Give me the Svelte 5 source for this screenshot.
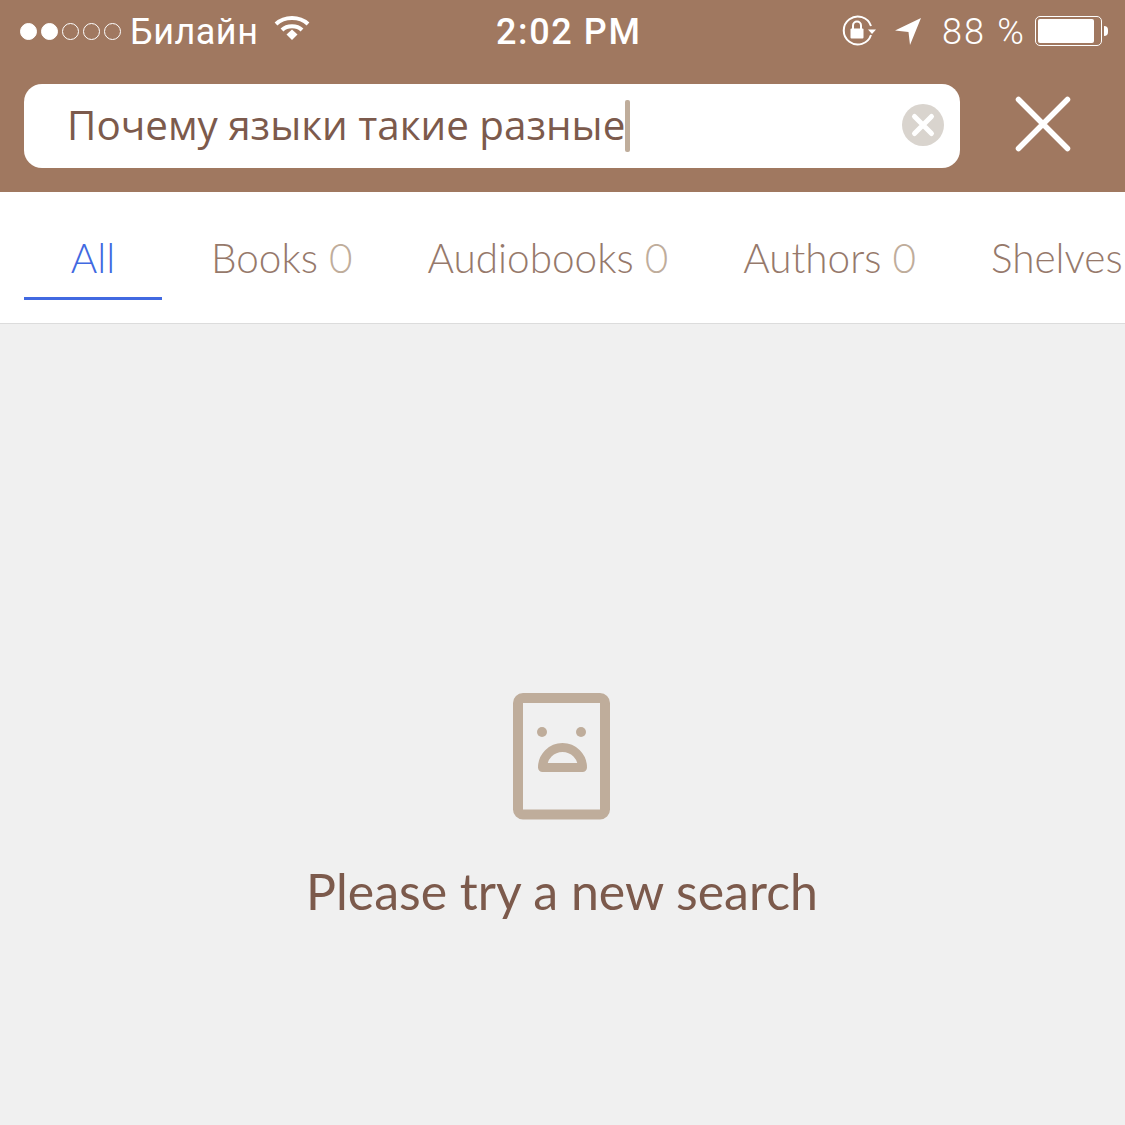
<script lang="ts">
  const tabs = [
    {label: 'All', count: null, active: true},
    {label: 'Books', count: 0},
    {label: 'Audiobooks', count: 0},
    {label: 'Authors', count: 0},
    {label: 'Shelves', count: null},
  ]
</script>

<div class="screen">
  <header class="top">
    <div class="status">
      <div class="status__left">
        <div class="signal">
          <i class="on"></i><i class="on"></i><i></i><i></i><i></i>
        </div>
        <span class="carrier">Билайн</span>
        <svg class="wifi" width="36" height="28" viewBox="0 0 36 28" fill="none" stroke="#fff" stroke-width="4">
          <path d="M2 10C10.500 2 25.500 2 34 10" />
          <path d="M8 16C13 11 23 11 28 16" />
          <path d="M12.500 20.600L18 15.500L23.500 20.600L18 26Z" fill="#fff" stroke="none" />
        </svg>
      </div>
      <span class="clock">2:02 PM</span>
      <div class="status__right">
        <svg class="lock" width="36" height="32" viewBox="0 0 36 32" fill="none">
          <path d="M30 20A14 14 0 1 1 30 11" stroke="#fff" stroke-width="2" />
          <path d="M27 14.500h8l-4 4.500z" fill="#fff" />
          <rect x="9.500" y="13.500" width="13" height="10" rx="1" fill="#fff" />
          <path d="M12 14V10.500a4 4 0 0 1 8 0V14" stroke="#fff" stroke-width="2" />
        </svg>
        <svg class="arrow" width="28" height="30" viewBox="0 0 28 30">
          <path d="M1 14.500L27 2L16 29L14.500 16Z" fill="#fff" />
        </svg>
        <span class="percent">88 %</span>
        <div class="battery"><span class="battery__level"></span></div>
        <span class="battery__tip"></span>
      </div>
    </div>
    <div class="search">
      <div class="search__box">
        <span class="search__text">Почему языки такие разные</span>
        <span class="caret"></span>
        <svg class="search__clear" width="44" height="44" viewBox="0 0 44 44">
          <circle cx="22" cy="22" r="21" fill="#d9d4ce" />
          <path d="M13.500 13.500L30.500 30.500M30.500 13.500L13.500 30.500" stroke="#fff" stroke-width="5" stroke-linecap="round" />
        </svg>
      </div>
      <svg class="search__close" width="56" height="56" viewBox="0 0 56 56">
        <path d="M3.500 3.500L52.500 52.500M52.500 3.500L3.500 52.500" stroke="#fff" stroke-width="5.500" stroke-linecap="round" />
      </svg>
    </div>
  </header>

  <nav class="tabs">
    {#each tabs as tab}
      <div class="tab" class:tab--active={tab.active}>
        {tab.label}{#if tab.count !== null && tab.count !== undefined}&nbsp;<span class="tab__count">{tab.count}</span>{/if}
      </div>
    {/each}
  </nav>

  <main class="empty">
    <svg class="empty__icon" width="98" height="127" viewBox="0 0 98 127" fill="none">
      <rect x="5" y="5" width="87" height="116.500" rx="5" stroke="#bfad9b" stroke-width="10" />
      <circle cx="29" cy="39" r="5" fill="#bfad9b" />
      <circle cx="68" cy="39" r="5" fill="#bfad9b" />
      <path d="M29.500 74.500a20 20 0 0 1 40 0Z" stroke="#bfad9b" stroke-width="9" stroke-linejoin="round" />
    </svg>
    <p class="empty__text">Please try a new search</p>
  </main>
</div>

<style>
  :global(body) {
    margin: 0;
  }

  .screen {
    display: flex;
    flex-direction: column;
    width: 1125px;
    height: 1125px;
    overflow: hidden;
    background: #f0f0f0;
    font-family: Lato, 'Noto Sans', sans-serif;
  }

  .top {
    height: 192px;
    background: #a07860;
  }

  .status {
    display: flex;
    justify-content: space-between;
    align-items: center;
    height: 62px;
    padding: 0 17px 0 20px;
    color: #fff;
    font-family: Roboto, sans-serif;
    font-size: 36px;
    position: relative;
  }

  .status__left,
  .status__right {
    display: flex;
    align-items: center;
  }

  .signal {
    display: flex;
    gap: 4px;
    margin-right: 9px;
  }

  .signal i {
    width: 15px;
    height: 15px;
    border: 1px solid #fff;
    border-radius: 50%;
  }

  .signal i.on {
    background: #fff;
  }

  .carrier {
    margin-top: 2px;
    letter-spacing: 0.5px;
  }

  .wifi {
    margin: -6px 0 0 16px;
  }

  .clock {
    position: absolute;
    left: 496px;
    top: 11px;
    font-weight: 500;
    letter-spacing: 1.6px;
  }

  .lock {
    margin-right: 17px;
  }

  .arrow {
    margin-right: 20px;
  }

  .percent {
    margin: 2px 9px 0 0;
    letter-spacing: 2.200px;
    font-weight: 300;
  }

  .battery {
    box-sizing: border-box;
    width: 67px;
    height: 30px;
    padding: 2px;
    border: 1px solid #fff;
    border-radius: 5px;
  }

  .battery__level {
    display: block;
    width: 56px;
    height: 24px;
    background: #fff;
    border-radius: 2px;
  }

  .battery__tip {
    width: 4px;
    height: 10px;
    margin-left: 2px;
    background: #fff;
    border-radius: 0 4px 4px 0;
  }

  .search {
    display: flex;
    align-items: center;
    padding: 22px 0 0 24px;
  }

  .search__box {
    display: flex;
    align-items: center;
    width: 936px;
    height: 84px;
    padding: 0 15px 0 43px;
    box-sizing: border-box;
    background: #fff;
    border-radius: 18px;
  }

  .search__text {
    margin-top: -4px;
    color: #7c5a4c;
    font-family: 'Open Sans', sans-serif;
    font-size: 40.400px;
  }

  .caret {
    width: 5px;
    height: 52px;
    background: #bfad9b;
    border-radius: 2px;
  }

  .search__clear {
    margin: -2px 0 0 auto;
  }

  .search__close {
    margin: -4px 0 0 55px;
  }

  .tabs {
    display: flex;
    height: 131px;
    padding-left: 24px;
    background: #fff;
    border-bottom: 1px solid #dcdcdc;
    white-space: nowrap;
  }

  .tab {
    flex: none;
    box-sizing: border-box;
    height: 108px;
    padding: 43px 0 0;
    margin-right: 75px;
    color: #96796b;
    font-size: 40.500px;
    line-height: 46px;
    font-weight: 300;
  }

  .tab:first-child {
    width: 138px;
    margin-right: 49px;
    text-align: center;
  }

  .tab--active {
    color: #4169e1;
    border-bottom: 3px solid #4169e1;
  }

  .tab__count {
    color: #bfad9b;
  }

  .empty {
    display: flex;
    flex-direction: column;
    align-items: center;
    flex: 1;
    padding-top: 369px;
    padding-right: 1px;
  }

  .empty__text {
    margin: 42px 0 0;
    color: #7c5a4c;
    font-size: 50px;
    line-height: 58px;
  }
</style>
